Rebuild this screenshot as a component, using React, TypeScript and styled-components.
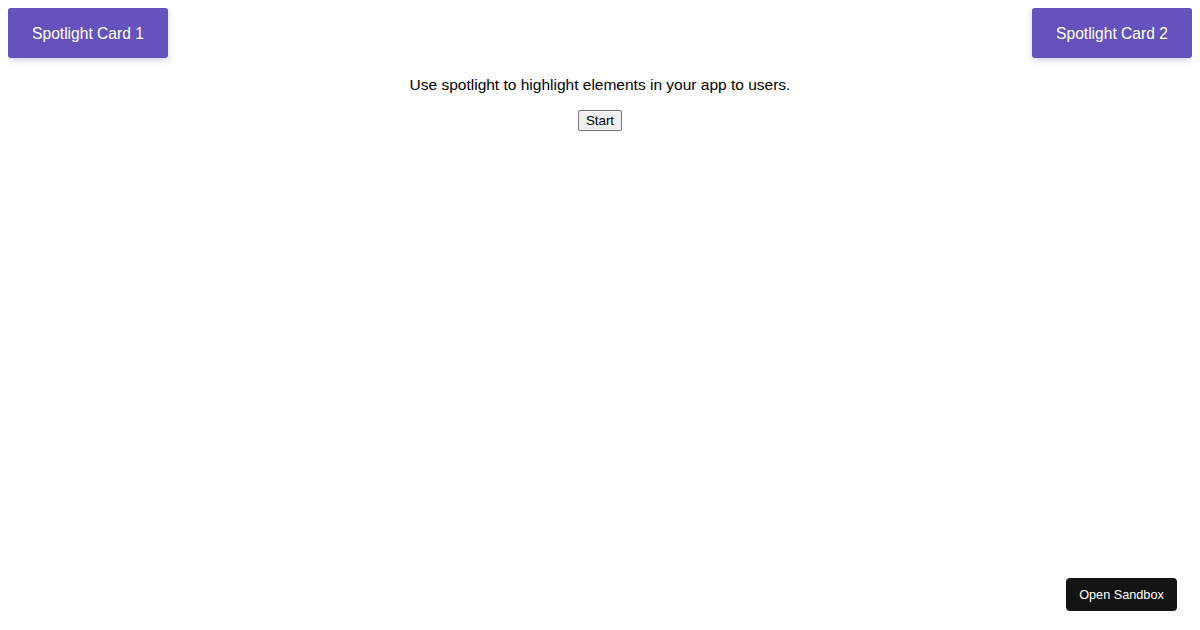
import React from "react";
import { styled, createGlobalStyle } from "styled-components";

const GlobalStyle = createGlobalStyle`
  body {
    margin: 8px;
    font-family: "Liberation Sans", Arial, sans-serif;
    background: #fff;
    color: #000;
  }
`;

const TopRow = styled.div`
  display: flex;
  justify-content: space-between;
  align-items: flex-start;
`;

const Card = styled.div`
  width: 160px;
  height: 50px;
  box-sizing: border-box;
  padding-top: 2px;
  display: flex;
  align-items: center;
  justify-content: center;
  background-color: #6552bf;
  color: #fff;
  font-size: 15.6px;
  border-radius: 3px;
  box-shadow: 0 2px 6px rgba(80, 60, 160, 0.25);
`;

const Intro = styled.p`
  margin: 18px 0 14px;
  text-align: center;
  font-size: 15.5px;
`;

const Actions = styled.div`
  display: flex;
  justify-content: center;
`;

const StartButton = styled.button`
  font-family: "Liberation Sans", Arial, sans-serif;
  font-size: 13.33px;
  padding: 1px 7px;
  height: 21px;
  margin-top: 2px;
  border: 1px solid #767676;
  border-radius: 2px;
  background-color: #efefef;
  color: #000;
`;

const SandboxLink = styled.a`
  position: fixed;
  right: 23px;
  bottom: 19px;
  display: flex;
  align-items: center;
  justify-content: center;
  width: 111px;
  height: 33px;
  background: #141414;
  color: #fff;
  font-size: 12.7px;
  border-radius: 4px;
  text-decoration: none;
`;

const App = () => {
  return (
    <>
      <GlobalStyle />
      <TopRow>
        <Card>Spotlight Card 1</Card>
        <Card>Spotlight Card 2</Card>
      </TopRow>
      <Intro>Use spotlight to highlight elements in your app to users.</Intro>
      <Actions>
        <StartButton>Start</StartButton>
      </Actions>
      <SandboxLink href="#">Open Sandbox</SandboxLink>
    </>
  );
};

export default App;
